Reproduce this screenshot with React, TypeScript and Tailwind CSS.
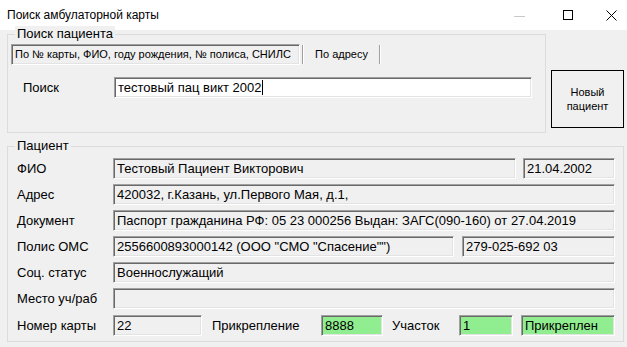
const sunken =
  "border border-t-[#a0a0a0] border-l-[#a0a0a0] border-r-white border-b-white shadow-[inset_1px_1px_0_#696969,inset_-1px_-1px_0_#e3e3e3]";

function Field({
  value,
  width,
  green,
  white,
}: {
  value: string;
  width: string;
  green?: boolean;
  white?: boolean;
}) {
  const bg = green ? "bg-[#90ee90]" : white ? "bg-white" : "bg-[#f0f0f0]";
  return (
    <div
      className={`${sunken} ${bg} ${width} h-[21px] flex items-center pl-[3px] text-[13px] text-black whitespace-nowrap overflow-hidden`}
    >
      {value}
    </div>
  );
}

function Label({ text, width }: { text: string; width: string }) {
  return <div className={`${width} shrink-0 text-[13px] text-black`}>{text}</div>;
}

function GroupBox({
  title,
  className,
  children,
}: {
  title: string;
  className: string;
  children: React.ReactNode;
}) {
  return (
    <div className={`relative border border-[#dcdcdc] ${className}`}>
      <span className="absolute -top-[9px] left-[7px] px-[2px] bg-[#f0f0f0] text-[13px] leading-[16px] text-black">
        {title}
      </span>
      {children}
    </div>
  );
}

function Row({ label, children }: { label: string; children: React.ReactNode }) {
  return (
    <div className="flex items-center h-[21px]">
      <Label text={label} width="w-[96px]" />
      {children}
    </div>
  );
}

export default function App() {
  return (
    <div className="w-[627px] h-[347px] bg-[#f0f0f0] overflow-hidden font-['Liberation_Sans',Arial,sans-serif] select-none">
      {/* title bar */}
      <div className="h-[30px] bg-white flex items-center">
        <div className="pl-[7px] text-[12px] text-black flex-1">Поиск амбулаторной карты</div>
        <div className="flex items-center h-full">
          <div className="w-[44px] flex justify-center">
            <div className="w-[11px] h-px bg-[#c8c8c8] mt-[2px]" />
          </div>
          <div className="w-[54px] flex justify-center">
            <div className="w-[10px] h-[10px] border border-black" />
          </div>
          <div className="w-[32px] flex justify-center">
            <svg width="11" height="11" viewBox="0 0 11 11">
              <path d="M0.5 0.5 L10.5 10.5 M10.5 0.5 L0.5 10.5" stroke="#000" strokeWidth="1" />
            </svg>
          </div>
        </div>
      </div>

      {/* search group + new patient button */}
      <div className="flex pl-[7px] pt-[4px]">
        <GroupBox title="Поиск пациента" className="w-[539px] h-[99px]">
          <div className="flex items-center pl-[3px] pt-[9px] text-[11px] text-black">
            <div className={`${sunken} w-[289px] h-[21px] flex items-center pl-[3px]`}>
              По № карты, ФИО, году рождения, № полиса, СНИЛС
            </div>
            <div className="w-px h-[19px] bg-[#a0a0a0] ml-[2px] border-r border-white box-content" />
            <div className="w-[75px] text-center">По адресу</div>
            <div className="w-px h-[19px] bg-[#a0a0a0] border-r border-white box-content" />
          </div>
          <div className="flex items-center mt-[12px] pl-[15px]">
            <div className="w-[91px] text-[13px] text-black">Поиск</div>
            <div
              className={`${sunken} bg-white w-[418px] h-[21px] flex items-center pl-[3px] text-[13px] text-black`}
            >
              тестовый пац викт 2002
              <span className="inline-block w-px h-[15px] bg-black" />
            </div>
          </div>
        </GroupBox>
        <div className="ml-[5px] mt-[36px] w-[73px] h-[58px] border border-black flex items-center justify-center text-center text-[11px] leading-[14px] text-black">
          Новый
          <br />
          пациент
        </div>
      </div>

      {/* patient group */}
      <div className="pl-[7px] pt-[13px]">
        <GroupBox title="Пациент" className="w-[617px] h-[196px]">
          <div className="flex flex-col gap-[5px] pl-[9px] pt-[11px]">
            <Row label="ФИО">
              <Field value="Тестовый Пациент Викторович" width="w-[403px]" />
              <div className="w-[7px]" />
              <Field value="21.04.2002" width="w-[92px]" />
            </Row>
            <Row label="Адрес">
              <Field value="420032, г.Казань, ул.Первого Мая, д.1," width="w-[502px]" />
            </Row>
            <Row label="Документ">
              <Field
                value="Паспорт гражданина РФ: 05 23 000256 Выдан: ЗАГС(090-160) от 27.04.2019"
                width="w-[502px]"
              />
            </Row>
            <Row label="Полис ОМС">
              <Field value={'2556600893000142 (ООО "СМО "Спасение"")'} width="w-[341px]" />
              <div className="w-[8px]" />
              <Field value="279-025-692 03" width="w-[153px]" />
            </Row>
            <Row label="Соц. статус">
              <Field value="Военнослужащий" width="w-[502px]" />
            </Row>
            <Row label="Место уч/раб">
              <Field value="" width="w-[502px]" />
            </Row>
            <div className="flex items-center h-[21px] mt-[1px]">
              <Label text="Номер карты" width="w-[96px]" />
              <Field value="22" width="w-[89px]" />
              <div className="w-[10px]" />
              <Label text="Прикрепление" width="w-[109px]" />
              <Field value="8888" width="w-[62px]" green />
              <div className="w-[9px]" />
              <Label text="Участок" width="w-[67px]" />
              <Field value="1" width="w-[54px]" green />
              <div className="w-[8px]" />
              <Field value="Прикреплен" width="w-[94px]" green />
            </div>
          </div>
        </GroupBox>
      </div>
    </div>
  );
}
